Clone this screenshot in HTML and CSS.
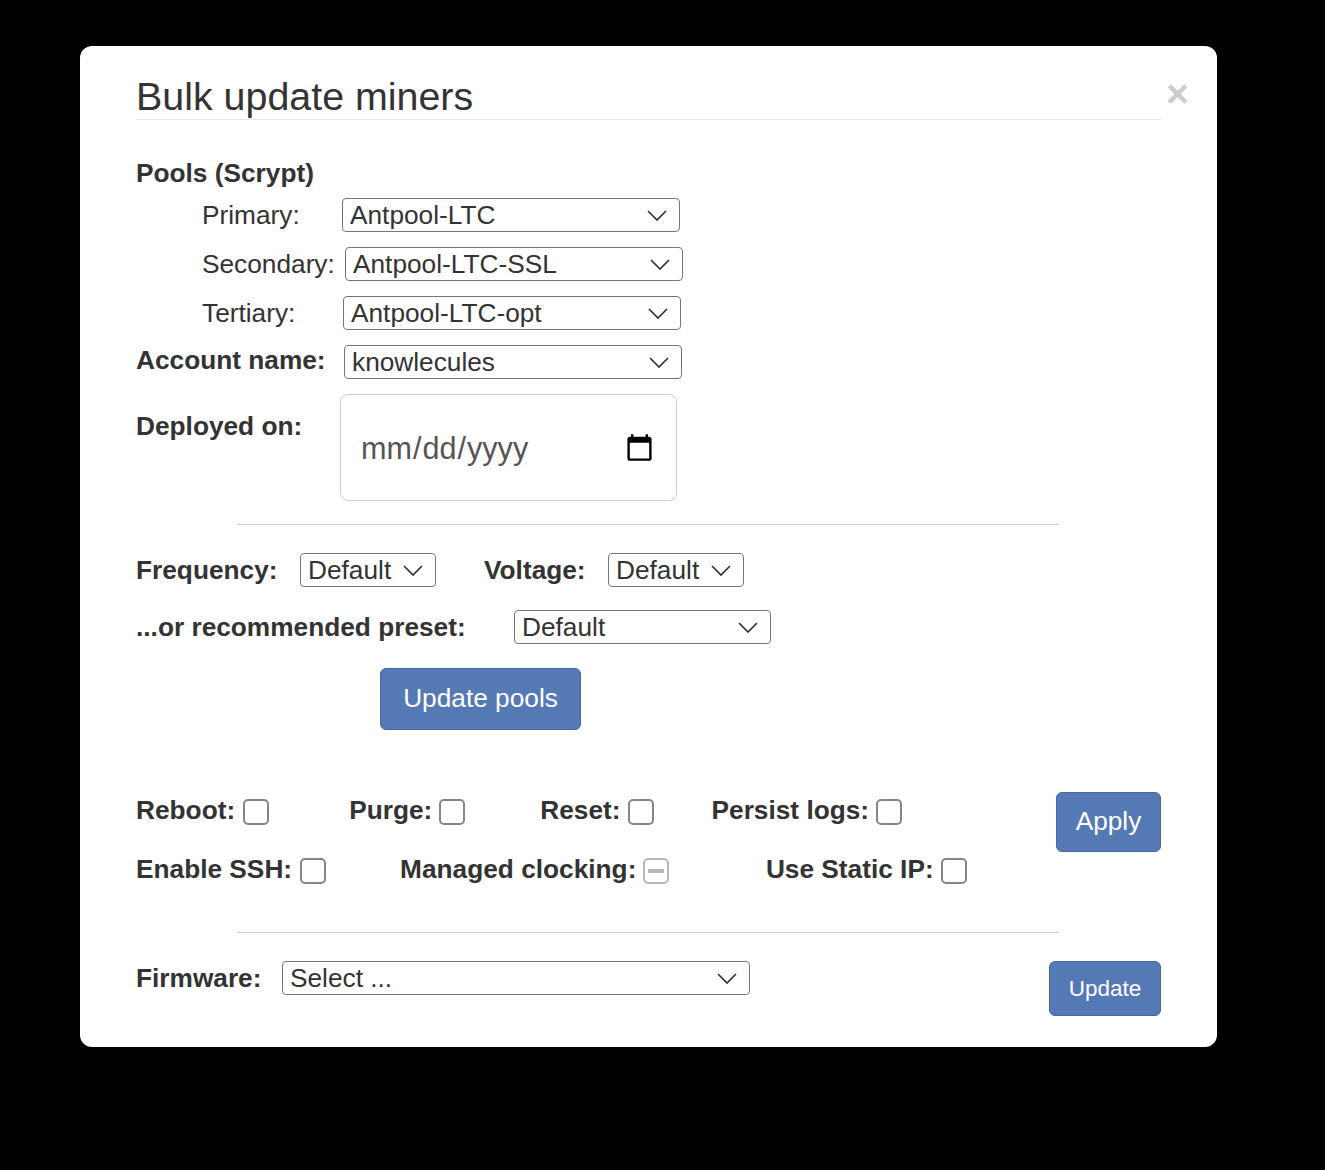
FILE: index.html
```html
<!DOCTYPE html>
<html lang="en">
  <head>
    <meta charset="UTF-8" />
    <meta name="viewport" content="width=device-width, initial-scale=1.0" />
    <title>Bulk update miners</title>
    <link rel="stylesheet" href="styles.css">
  </head>
  <body>
    <div class="modal">
      <div class="modal-header">
        <h2>Bulk update miners</h2>
        <span class="close">×</span>
      </div>

      <!-- Pools -->
      <div class="pools-title">Pools (Scrypt)</div>
      <div class="row pool-row">
        <label class="pool-label primary-label">Primary:</label>
        <select class="sel sel-pool"><option>Antpool-LTC</option></select>
      </div>
      <div class="row pool-row">
        <label class="pool-label secondary-label">Secondary:</label>
        <select class="sel sel-pool"><option>Antpool-LTC-SSL</option></select>
      </div>
      <div class="row pool-row">
        <label class="pool-label tertiary-label">Tertiary:</label>
        <select class="sel sel-pool"><option>Antpool-LTC-opt</option></select>
      </div>
      <div class="row account-row">
        <label class="bold account-label">Account name:</label>
        <select class="sel sel-pool"><option>knowlecules</option></select>
      </div>
      <div class="row deployed-row">
        <label class="bold deployed-label">Deployed on:</label>
        <input type="date" class="date-input" />
      </div>

      <hr class="divider divider-first" />

      <!-- Frequency -->
      <div class="row freq-row">
        <label class="bold freq-label">Frequency:</label>
        <select class="sel sel-small"><option>Default</option></select>
        <label class="bold voltage-label">Voltage:</label>
        <select class="sel sel-small"><option>Default</option></select>
      </div>
      <div class="row preset-row">
        <label class="bold preset-label">...or recommended preset:</label>
        <select class="sel sel-preset"><option>Default</option></select>
      </div>
      <button class="btn btn-pools">Update pools</button>

      <!-- Toggles -->
      <div class="toggles">
        <div class="toggle-lines">
          <div class="row toggle-row">
            <label class="bold">Reboot:</label><input type="checkbox" class="check check-reboot" />
            <label class="bold">Purge:</label><input type="checkbox" class="check check-purge" />
            <label class="bold">Reset:</label><input type="checkbox" class="check check-reset" />
            <label class="bold">Persist logs:</label><input type="checkbox" class="check" />
          </div>
          <div class="row toggle-row">
            <label class="bold">Enable SSH:</label><input type="checkbox" class="check check-ssh" />
            <label class="bold">Managed clocking:</label><span class="check-mixed check-managed"></span>
            <label class="bold">Use Static IP:</label><input type="checkbox" class="check" />
          </div>
        </div>
        <button class="btn btn-apply">Apply</button>
      </div>

      <hr class="divider divider-second" />

      <!-- Firmware -->
      <div class="firmware">
        <label class="bold firmware-label">Firmware:</label>
        <select class="sel sel-firmware"><option>Select ...</option></select>
        <button class="btn btn-update">Update</button>
      </div>
    </div>
  </body>
</html>
```

FILE: styles.css
```css
body {
  margin: 0;
  padding: 46px 0 123px 80px;
  background: #000;
  font-family: "Liberation Sans", Arial, sans-serif;
  font-size: 26.25px;
  color: #333;
}
.modal {
  box-sizing: border-box;
  width: 1137px;
  height: 1001px;
  padding: 0 56px;
  background: #fff;
  border-radius: 12px;
}
.modal-header {
  height: 73px;
  border-bottom: 1px solid #e5e5e5;
  position: relative;
}
.modal-header h2 {
  margin: 0;
  padding-top: 26px;
  font-size: 39.4px;
  line-height: 48px;
  font-weight: 400;
}
.close {
  position: absolute;
  right: -28px;
  top: 25px;
  font-size: 39.4px;
  line-height: 45px;
  font-weight: 700;
  color: #ccc;
}
.row {
  display: flex;
  align-items: center;
}
.bold {
  font-weight: 700;
}
.pools-title {
  margin-top: 38px;
  font-weight: 700;
  line-height: 30px;
}
.pool-row {
  height: 34px;
  margin-bottom: 15px;
  padding-left: 66px;
}
.pools-title + .pool-row {
  margin-top: 10px;
}
.sel {
  box-sizing: border-box;
  height: 34px;
  padding: 0 36px 0 7px;
  font-family: inherit;
  font-size: 26.25px;
  color: #333;
  appearance: none;
  background: #fff url("data:image/svg+xml,%3Csvg xmlns='http://www.w3.org/2000/svg' width='20' height='11'%3E%3Cpath d='M1 1l9 9 9-9' fill='none' stroke='%23333' stroke-width='1.7'/%3E%3C/svg%3E") no-repeat right 12px center;
  border: 1px solid #767676;
  border-radius: 4px;
}
.sel-pool {
  width: 338px;
}
.sel-small {
  width: 136px;
}
.sel-preset {
  width: 257px;
}
.sel-firmware {
  width: 468px;
}
.primary-label {
  width: 140px;
}
.secondary-label {
  width: 143px;
}
.tertiary-label {
  width: 141px;
}
.account-row {
  height: 34px;
}
.account-label {
  width: 208px;
  position: relative;
  top: -2px;
}
.deployed-row {
  align-items: flex-start;
  margin-top: 15px;
}
.deployed-label {
  width: 204px;
  padding-top: 17px;
}
.date-input {
  box-sizing: border-box;
  width: 337px;
  height: 107px;
  padding: 1px 19px 0;
  font-family: inherit;
  font-size: 30.6px;
  color: #555;
  background: #fff;
  border: 1px solid #ccc;
  border-radius: 8px;
}
.divider {
  width: 820px;
  height: 1px;
  margin: 0 0 0 102px;
  border: 0;
  background: #ccc;
}
.divider-first {
  margin-top: 23px;
}
.freq-row {
  margin-top: 28px;
  height: 34px;
}
.freq-label {
  width: 164px;
}
.voltage-label {
  margin-left: 48px;
  width: 124px;
}
.preset-row {
  margin-top: 23px;
  height: 34px;
}
.preset-label {
  width: 378px;
}
.btn {
  display: block;
  box-sizing: border-box;
  padding: 0;
  font-family: inherit;
  color: #fff;
  background: #5579b5;
  border: 1px solid #46689f;
  border-radius: 6px;
}
.btn-pools {
  width: 201px;
  height: 62px;
  margin: 24px 0 0 244px;
  padding-bottom: 2px;
  font-size: 26.25px;
}
.toggles {
  display: flex;
  justify-content: space-between;
  margin-top: 62px;
}
.toggle-lines {
  padding-top: 4px;
}
.toggle-row {
  height: 30px;
  margin-bottom: 29px;
}
.toggle-row label {
  margin-right: 7px;
  padding-bottom: 2px;
}
.toggle-row label:first-child {
  margin-right: 8px;
}
.check {
  box-sizing: border-box;
  width: 26px;
  height: 26px;
  margin: 2px 0 0;
  appearance: none;
  background: #fff;
  border: 2px solid #858585;
  border-radius: 5px;
}
.check-mixed {
  box-sizing: border-box;
  display: flex;
  align-items: center;
  justify-content: center;
  width: 26px;
  height: 26px;
  margin-top: 2px;
  border: 2px solid #b8b8b8;
  border-radius: 5px;
}
.check-mixed::before {
  content: "";
  width: 16px;
  height: 4px;
  background: #b8b8b8;
}
.check-reboot {
  margin-right: 80px;
}
.check-purge {
  margin-right: 75px;
}
.check-reset {
  margin-right: 58px;
}
.check-ssh {
  margin-right: 74px;
}
.check-managed {
  margin-right: 96.5px;
}
.btn-apply {
  width: 105px;
  height: 60px;
  padding-bottom: 2px;
  font-size: 26.25px;
}
.divider-second {
  margin-top: 18px;
}
.firmware {
  display: flex;
  align-items: flex-start;
  margin-top: 28px;
}
.firmware-label {
  width: 146px;
  line-height: 34px;
}
.btn-update {
  width: 112px;
  height: 55px;
  margin-left: auto;
  font-size: 22.5px;
}
```
